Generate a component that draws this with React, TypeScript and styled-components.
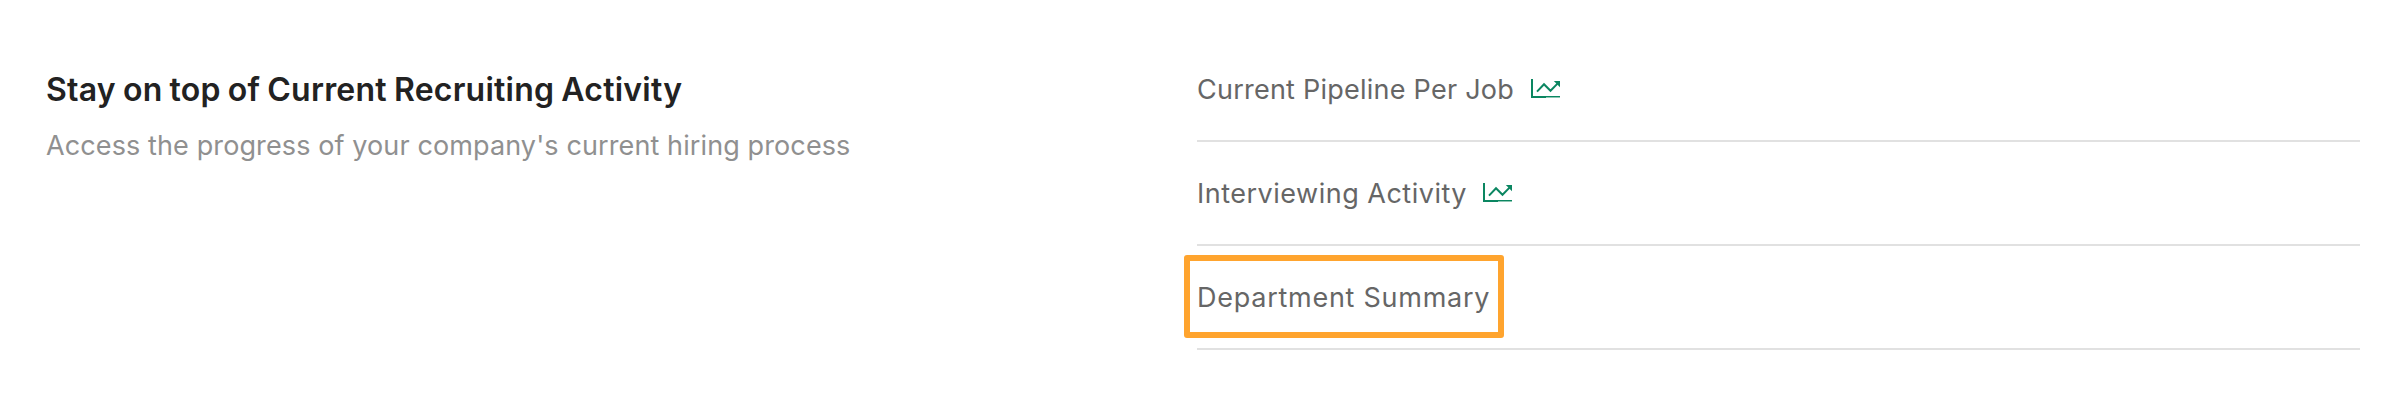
import React from "react";
import styled, { createGlobalStyle } from "styled-components";

const Global = createGlobalStyle`
  * { box-sizing: border-box; }
  body { margin: 0; background: #fff; font-family: Inter, sans-serif; }
`;

const Section = styled.main`
  display: grid;
  grid-template-columns: 1151px 1163px;
  height: 410px;
  padding: 38px 0 0 46px;
`;

const Heading = styled.h2`
  margin: 31px 0 0;
  font-size: 32px;
  line-height: 42px;
  font-weight: 600;
  letter-spacing: 0.23px;
  word-spacing: -1.2px;
  color: #222;
  white-space: nowrap;
`;

const Description = styled.p`
  margin: 15px 0 0;
  font-size: 27px;
  line-height: 40px;
  letter-spacing: 0.11px;
  color: #909090;
  white-space: nowrap;
`;

const Reports = styled.ul`
  margin: 0;
  padding: 0;
  list-style: none;
`;

const Row = styled.li`
  position: relative;
  display: flex;
  align-items: center;
  height: 104px;
  border-bottom: 2px solid #e1e1e1;
`;

const Label = styled.span<{ $width: number; $tracking: number }>`
  width: ${(p) => p.$width}px;
  padding-top: 1px;
  font-size: 27px;
  line-height: 40px;
  letter-spacing: ${(p) => p.$tracking}px;
  color: #666;
  white-space: nowrap;
`;

const ChartIcon = styled.svg`
  display: block;
  flex: none;
  width: 29px;
  height: 19px;
  margin: 0 0 1px 16px;
`;

const Highlight = styled.div`
  position: absolute;
  top: 9px;
  left: -13px;
  width: 320px;
  height: 83px;
  border: 6px solid #ffa42e;
  border-radius: 3px;
`;

const reports = [
  { name: "Current Pipeline Per Job", width: 318, tracking: 0.24, chart: true },
  { name: "Interviewing Activity", width: 270, tracking: 0.5, chart: true },
  { name: "Department Summary", width: 294, tracking: 0.74, highlighted: true },
];

function TrendChart() {
  return (
    <ChartIcon viewBox="0 0 29 19" fill="none" aria-hidden="true">
      <path d="M0 0h2v17h27v1H15v1H0z" fill="#0b8661" />
      <path d="M15 18h14v1H15z" fill="#8cc8b4" />
      <path d="M6 12.6 13 5.2l6.5 6.6 7-7.2" stroke="#0b8661" strokeWidth="2" />
      <path d="M22.8 2H29v6.2z" fill="#0b8661" />
    </ChartIcon>
  );
}

export default function App() {
  return (
    <>
      <Global />
      <Section>
        <div>
          <Heading>Stay on top of Current Recruiting Activity</Heading>
          <Description>Access the progress of your company's current hiring process</Description>
        </div>
        <Reports>
          {reports.map((r) => (
            <Row key={r.name}>
              <Label $width={r.width} $tracking={r.tracking}>{r.name}</Label>
              {r.chart && <TrendChart />}
              {r.highlighted && <Highlight />}
            </Row>
          ))}
        </Reports>
      </Section>
    </>
  );
}
